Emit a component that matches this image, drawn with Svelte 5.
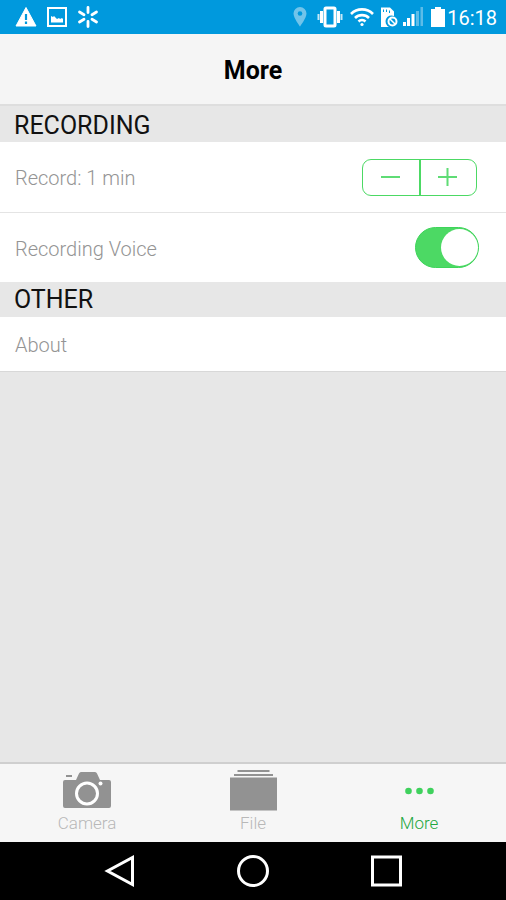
<script lang="ts">
  let minutes = $state(1);
  let voice = $state(true);
  let activeTab = $state('More');

  const tabs = ['Camera', 'File', 'More'];

  function changeMinutes(step: number) {
    minutes = Math.max(1, minutes + step);
  }
</script>

<svelte:head>
  <title>More</title>
</svelte:head>

<div class="screen">
  <div class="status-bar">
    <div class="status-left">
      <svg width="22" height="22" viewBox="0 0 22 22">
        <path d="M11 1.5 21 20H1Z" fill="#fff" stroke="#fff" stroke-linejoin="round" />
        <path d="M11 8v6M11 15.5v2.5" stroke="#0099dd" stroke-width="2.2" />
      </svg>
      <svg width="20" height="20" viewBox="0 0 20 20">
        <rect x="1" y="1" width="18" height="18" fill="none" stroke="#fff" stroke-width="2" />
        <path d="M4 15.5V9l2 1 1-1 3 3 2-1 1 1 2-1 1 1v3.5Z" fill="#fff" />
      </svg>
      <svg width="22" height="22" viewBox="0 0 22 22" stroke="#fff" stroke-width="2.8" stroke-linecap="round">
        <path d="M11 1.5v5M11 15.5v5M2.5 6l4.500 2.700M15 13.300l4.500 2.700M2.500 16l4.500-2.700M15 8.700l4.500-2.700" />
      </svg>
    </div>

    <div class="status-right">
      <svg class="pin" width="14" height="22" viewBox="0 0 14 22">
        <path d="M7 1a6.500 6.500 0 0 0-6.500 6.500C.5 12 7 20.500 7 20.500S13.500 12 13.500 7.500A6.500 6.500 0 0 0 7 1Z" fill="#71c4ea" />
        <circle cx="7" cy="7.500" r="2.300" fill="#0099dd" />
      </svg>
      <svg class="vibrate" width="26" height="22" viewBox="0 0 26 22">
        <rect x="8" y="2" width="10" height="18" rx="1" fill="none" stroke="#fff" stroke-width="3" />
        <path d="M4.500 5v12M21.500 5v12" stroke="#fff" stroke-width="3" />
        <path d="M1.500 8v6M24.500 8v6" stroke="#c6e8f7" stroke-width="2" />
      </svg>
      <svg class="wifi" width="24" height="20" viewBox="0 0 24 20" fill="none" stroke="#fff" stroke-width="2.600">
        <path d="M1 7a15.500 15.500 0 0 1 22 0M5 11a10 10 0 0 1 14 0M8.500 14.500a5 5 0 0 1 7 0" />
        <circle cx="12" cy="17.500" r="1.600" fill="#fff" stroke="none" />
      </svg>
      <svg class="sim" width="18" height="22" viewBox="0 0 18 22">
        <path d="M1 1.500h9l4 4v4.500a6 6 0 0 0-5 11H1Z" fill="#fff" />
        <path d="M3.500 3.500v2.500M6.500 3.500v2.500M9.500 4.500v2.500" stroke="#0099dd" />
        <circle cx="12.500" cy="15.500" r="4" fill="#0099dd" stroke="#fff" stroke-width="2" />
        <path d="m10 13 5 5" stroke="#fff" stroke-width="1.500" />
      </svg>
      <svg class="signal" width="22" height="20" viewBox="0 0 22 20">
        <path d="M1 15h3v4H1ZM5 11h3v8H5ZM9.500 7h3v12h-3Z" fill="#fff" />
        <path d="M14 4h3v15h-3ZM18.500 0h2.500v19h-2.500Z" fill="#5cbce8" />
      </svg>
      <svg class="battery" width="14" height="20" viewBox="0 0 14 20">
        <path d="M4 0h6v2h4v18H0V2h4Z" fill="#fff" />
      </svg>
      <span class="clock">16:18</span>
    </div>
  </div>

  <header>
    <h1>More</h1>
  </header>

  <main>
    <section>
      <h2 class="first">RECORDING</h2>
      <div class="row">
        <span>Record: {minutes} min</span>
        <div class="stepper">
          <button type="button" aria-label="Decrease" onclick={() => changeMinutes(-1)}>
            <svg width="20" height="20" viewBox="0 0 20 20"><path d="M0 10h19" /></svg>
          </button>
          <button type="button" aria-label="Increase" onclick={() => changeMinutes(1)}>
            <svg width="20" height="20" viewBox="0 0 20 20"><path d="M0 10h19M9.500 1v18" /></svg>
          </button>
        </div>
      </div>
      <div class="row divided">
        <label for="voice">Recording Voice</label>
        <input id="voice" class="switch" type="checkbox" role="switch" bind:checked={voice} />
      </div>
    </section>

    <section>
      <h2>OTHER</h2>
      <a class="row about" href="#about">About</a>
    </section>
  </main>

  <nav class="tab-bar" aria-label="Tabs">
    {#each tabs as tab (tab)}
      <button type="button" class="tab" class:active={tab === activeTab} onclick={() => (activeTab = tab)}>
        {#if tab === 'Camera'}
          <svg width="48" height="42" viewBox="0 0 48 42">
            <path d="M3 5h6v2H3Z" fill="currentColor" />
            <path d="M2 10h11l3-6.500q.6-1.500 2-1.500h14q1.400 0 2 1.500l3 6.500h9q2 0 2 2v24q0 2-2 2H2q-2 0-2-2V12q0-2 2-2Z" fill="currentColor" />
            <circle cx="24" cy="23.500" r="10.500" fill="none" stroke="#fff" stroke-width="3" />
            <circle cx="37.500" cy="13.500" r="2" fill="#fff" />
          </svg>
        {:else if tab === 'File'}
          <svg width="48" height="42" viewBox="0 0 48 42" fill="currentColor">
            <path d="M8.500 0h32v2h-32ZM5 4h39v2H5ZM1 7.500h47v33H1Z" />
          </svg>
        {:else}
          <svg width="48" height="42" viewBox="0 0 48 42" fill="currentColor">
            <circle cx="13.500" cy="21" r="3.300" />
            <circle cx="24.500" cy="21" r="3.300" />
            <circle cx="35.500" cy="21" r="3.300" />
          </svg>
        {/if}
        <span>{tab}</span>
      </button>
    {/each}
  </nav>

  <div class="system-nav">
    <button type="button" aria-label="Back">
      <svg width="32" height="32" viewBox="0 0 32 32"><path d="M28.500 2.500v27L3.500 16Z" /></svg>
    </button>
    <button type="button" aria-label="Home">
      <svg width="32" height="32" viewBox="0 0 32 32"><circle cx="16" cy="16" r="14.500" /></svg>
    </button>
    <button type="button" aria-label="Recent apps">
      <svg width="32" height="32" viewBox="0 0 32 32"><rect x="2.500" y="2" width="28" height="28" /></svg>
    </button>
  </div>
</div>

<style>
  :global(body) {
    margin: 0;
  }

  .screen {
    min-height: 100vh;
    display: flex;
    flex-direction: column;
    background: #e7e7e7;
    font-family: Roboto, 'Liberation Sans', sans-serif;
  }

  svg {
    display: block;
    flex: none;
  }

  button {
    margin: 0;
    padding: 0;
    border: 0;
    background: none;
    font: inherit;
    cursor: pointer;
  }

  .status-bar {
    height: 34px;
    padding: 0 9px 0 15px;
    display: flex;
    align-items: center;
    justify-content: space-between;
    background: #0099dd;
    color: #fff;
  }

  .status-left,
  .status-right {
    display: flex;
    align-items: center;
  }

  .status-left {
    gap: 10px;
  }

  .pin {
    margin-right: 10px;
  }

  .vibrate {
    margin-right: 7px;
  }

  .wifi {
    margin-right: 4px;
  }

  .sim,
  .clock {
    margin-left: 2px;
  }

  .signal {
    margin: 0 7px 0 4px;
  }

  .clock {
    padding-top: 2px;
    font-size: 20px;
    line-height: 24px;
  }

  header {
    height: 70px;
    display: flex;
    align-items: center;
    justify-content: center;
    border-bottom: 2px solid #dedede;
    background: #f5f5f5;
  }

  h1 {
    margin: 0;
    padding-top: 4px;
    font-size: 25px;
    line-height: 28px;
    font-weight: 700;
    color: #000;
  }

  main {
    flex: 1;
  }

  h2 {
    margin: 0;
    padding: 4px 14px 3px;
    font-size: 25px;
    line-height: 28px;
    font-weight: 400;
    color: #111;
    background: #e7e7e7;
  }

  .first {
    padding: 6px 14px 2px;
  }

  .row {
    min-height: 70px;
    padding: 0 27px 0 15px;
    display: flex;
    align-items: center;
    justify-content: space-between;
    background: #fff;
    color: #949494;
    font-size: 20px;
    line-height: 24px;
    font-weight: 300;
    text-decoration: none;
  }

  .row span,
  .row label {
    padding-top: 2px;
  }

  .divided {
    min-height: 69px;
    border-top: 1px solid #e4e4e4;
  }

  .about {
    min-height: 52px;
    padding-top: 2px;
    border-bottom: 1px solid #d8d8d8;
  }

  .stepper {
    width: 113px;
    height: 35px;
    margin-right: 2px;
    display: flex;
    border: 1px solid #4cd964;
    border-radius: 9px;
  }

  .stepper button {
    flex: 1;
    display: grid;
    place-items: center;
  }

  .stepper button + button {
    border-left: 2px solid #4cd964;
  }

  .stepper svg {
    fill: none;
    stroke: #5fdc75;
    stroke-width: 2;
  }

  .switch {
    appearance: none;
    box-sizing: border-box;
    width: 64px;
    height: 41px;
    margin: 0;
    display: flex;
    border: 1px solid #b5b5b5;
    border-radius: 21px;
    background: #d8d8d8;
    cursor: pointer;
  }

  .switch::before {
    content: '';
    width: 37px;
    height: 37px;
    margin: 1px 0;
    border-radius: 50%;
    background: #fff;
  }

  .switch:checked {
    justify-content: flex-end;
    border-color: #3ed45a;
    background: #4cd964;
  }

  .tab-bar {
    height: 78px;
    padding: 0 4px;
    display: flex;
    border-top: 2px solid #cfcfcf;
    background: #f6f6f6;
  }

  .tab {
    flex: 1;
    padding-top: 6px;
    display: flex;
    flex-direction: column;
    align-items: center;
    color: #929292;
  }

  .tab span {
    font-size: 17px;
    line-height: 22px;
    font-weight: 300;
    color: #b8b8b8;
  }

  .tab.active {
    color: #3fd15d;
  }

  .tab.active span {
    color: #1fa83e;
  }

  .system-nav {
    height: 58px;
    display: flex;
    align-items: center;
    justify-content: center;
    gap: 101px;
    background: #000;
  }

  .system-nav svg {
    fill: none;
    stroke: #fff;
    stroke-width: 3;
  }
</style>
